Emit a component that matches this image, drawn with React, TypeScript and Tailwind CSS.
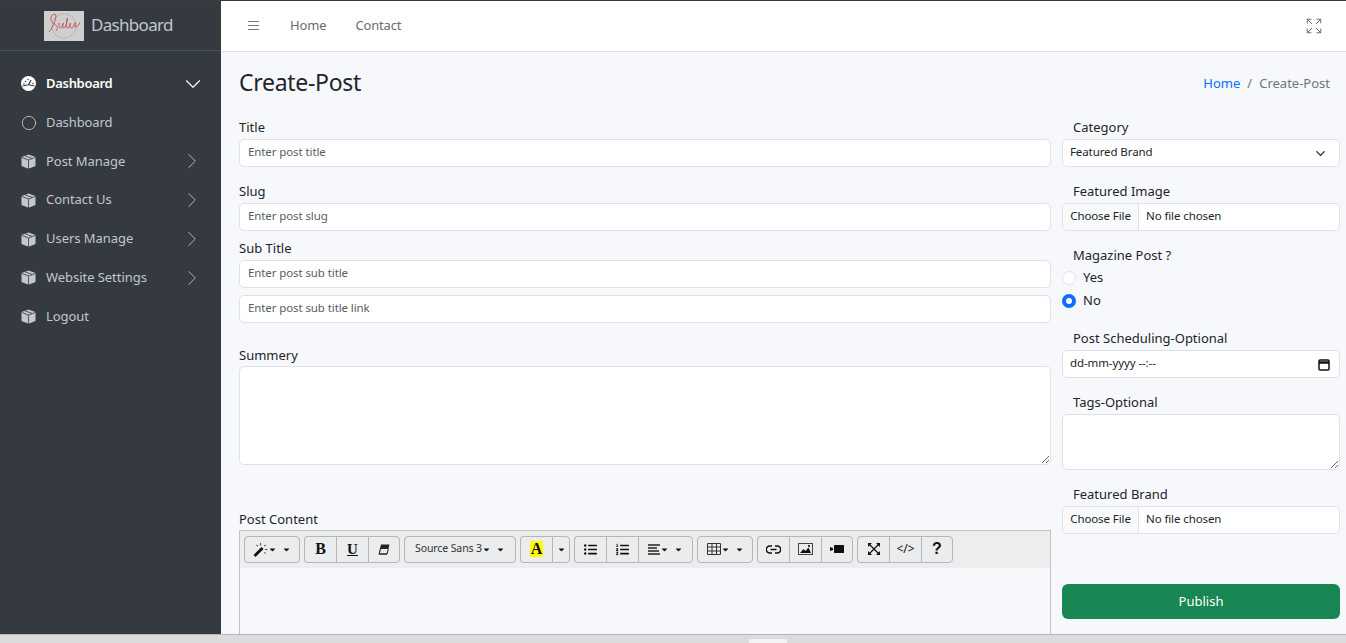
import React from "react";
import { FaListUl, FaListOl, FaCaretDown } from "react-icons/fa";
import { ChevronRight, ChevronDown, Circle, Expand } from "lucide-react";

const navItems = [
  { label: "Post Manage", arrow: true },
  { label: "Contact Us", arrow: true },
  { label: "Users Manage", arrow: true },
  { label: "Website Settings", arrow: true },
  { label: "Logout", arrow: false },
];

const Gauge = () => (
  <svg width="15" height="15" viewBox="0 0 15 15" className="shrink-0">
    <circle cx="7.5" cy="7.5" r="7.500" fill="#fff" />
    <path d="M1.500 10Q7.500 7.500 13.500 10" fill="none" stroke="#343a40" strokeWidth="1" />
    <path d="M7.500 9L10 4" stroke="#343a40" strokeWidth="1.300" />
    <path d="M4.500 5.500h.01M7 3.500h.01M3 8h.01M12 7.500h.01" stroke="#343a40" strokeWidth="1.500" strokeLinecap="round" />
  </svg>
);

const Cube = () => (
  <svg width="15" height="15" viewBox="0 0 15 15" className="shrink-0">
    <path d="M7.500 0.500L14.500 3v9l-7 2.800L0.500 12V3z" fill="#c2c7d0" />
    <path d="M0.500 3.300l7 2.700 7-2.700M7.500 6v9M4 1.800l7 2.600" fill="none" stroke="#343a40" strokeWidth="0.800" />
  </svg>
);

function Sidebar() {
  return (
    <aside className="w-[221px] shrink-0 bg-[#343a40] text-[#c2c7d0]">
      <div className="h-[50px] border-b border-[#4b545c] flex items-center pl-[44px] gap-[7px]">
        <div className="w-[40px] h-[30px] bg-[#cfcfcf] flex items-center justify-center overflow-hidden">
          <svg width="40" height="30" viewBox="0 0 40 30">
            <circle cx="20" cy="15" r="12" fill="none" stroke="#777" strokeWidth="0.800" strokeDasharray="1 1.500" />
            <path d="M5 21C9 17 14 4 11 3 7 3 5 9 9 12s6 4 3 8M15 12c0 3 0 5 1.500 5s2-4 3-5c-1 3-1 5 .5 5s3-6 3.500-10c-1 3-2 10 0 10s2-3 3-5c-1 2-1 5 1 5s2-3 3.500-5-1 5 1 4 3-2 4-5" fill="none" stroke="#c0504d" strokeWidth="0.900" />
          </svg>
        </div>
        <span className="text-[17px] leading-none tracking-[-0.7px] pb-[3px]">Dashboard</span>
      </div>
      <nav className="pt-[13px]">
        <div className="h-[39px] flex items-center pl-[21px] pr-[15px] text-white font-semibold">
          <Gauge />
          <span className="ml-[10px] flex-1 text-[13px] tracking-[-0.3px]">Dashboard</span>
          <ChevronDown className="w-[26px] h-[26px]" strokeWidth={1} />
        </div>
        <div className="h-[39px] flex items-center pl-[21px] pr-[21px]">
          <Circle className="w-[16px] h-[16px] -ml-[0.5px]" strokeWidth={1.3} />
          <span className="ml-[9.500px] flex-1 text-[13px] tracking-[-0.1px]">Dashboard</span>
        </div>
        {navItems.map((n) => (
          <div key={n.label} className="h-[38.830px] flex items-center pl-[21px] pr-[16px]">
            <Cube />
            <span className="ml-[10px] flex-1 text-[13px] tracking-[-0.05px]">{n.label}</span>
            {n.arrow && <ChevronRight className="w-[26px] h-[26px]" strokeWidth={0.8} />}
          </div>
        ))}
      </nav>
    </aside>
  );
}

const labelCls = "block text-[13px] leading-[20px] text-[#212529]";
const inputCls = "block w-full h-[28px] bg-white border border-[#dee2e6] rounded-[5px] px-[8px] pb-[4px] text-[11.500px] tracking-[-0.1px] text-[#212529] placeholder:text-[#595c5f] outline-none";
const rowText = "text-[11.500px] tracking-[-0.1px] text-[#212529]";

function Field({ label, placeholder, className }: { label: string; placeholder: string; className?: string }) {
  return (
    <div className={className}>
      <label className={`${labelCls} mb-[2px]`}>{label}</label>
      <input className={inputCls} placeholder={placeholder} />
    </div>
  );
}

function FileField({ label, className }: { label: string; className?: string }) {
  return (
    <div className={className}>
      <label className={`${labelCls} pl-[11px] mb-[2px]`}>{label}</label>
      <div className={`h-[28px] bg-white border border-[#dee2e6] rounded-[5px] flex items-center overflow-hidden ${rowText}`}>
        <span className="h-full w-[76px] pb-[3px] bg-[#f8f9fa] border-r border-[#dee2e6] flex items-center justify-center">Choose File</span>
        <span className="pl-[7px] pb-[3px]">No file chosen</span>
      </div>
    </div>
  );
}

function TB({ children, w = 32, last = false, first = false }: { children: React.ReactNode; w?: number; last?: boolean; first?: boolean }) {
  return (
    <div
      style={{ width: w }}
      className={`h-[27px] pb-[1px] flex items-center justify-center bg-[#ebecee] border-y border-[#b5b5b5] border-l text-[#111] ${first ? "rounded-l-[4px]" : ""} ${last ? "rounded-r-[4px] border-r" : ""}`}
    >
      {children}
    </div>
  );
}

const Caret = ({ className = "" }: { className?: string }) => <FaCaretDown className={`w-[9px] h-[9px] ${className}`} />;

const Wand = () => (
  <svg width="15" height="15" viewBox="0 0 15 15">
    <path d="M.5 13L8.500 5l2 2L2.500 15z" fill="#111" />
    <path d="M7.500 1v2.500M12.500 3l-1.200 1.200M14.500 7.500h-2.500M12.500 11.500l-1.200-1.200M3.500 3l1.200 1.200" stroke="#555" strokeWidth="1.100" />
  </svg>
);
const Eraser = () => (
  <svg width="12" height="11" viewBox="0 0 12 11">
    <path d="M3.500 .5H11.500L9 10.500H1z" fill="#222" />
    <path d="M2.700 5h7.600L9 9.500H1.700z" fill="#ebecee" />
    <path d="M1 10.500L3.500 .5" stroke="#222" />
    <path d="M1.500 10h7.500L10.300 5" fill="none" stroke="#222" />
  </svg>
);
const AlignLines = () => (
  <svg width="12" height="11" viewBox="0 0 12 11" fill="none" stroke="#222" strokeWidth="1.500">
    <path d="M0 1h12M0 4h9M0 7h11M0 10h12" />
  </svg>
);
const Chain = () => (
  <svg width="15" height="9" viewBox="0 0 15 9" fill="none" stroke="#111" strokeWidth="1.600">
    <path d="M6 1H3.800a3.300 3.300 0 0 0 0 7H6M9 1h2.200a3.300 3.300 0 0 1 0 7H9M4.500 4.500h6" />
  </svg>
);
const Picture = () => (
  <svg width="15" height="12" viewBox="0 0 15 12">
    <rect x=".5" y=".5" width="14" height="11" fill="none" stroke="#444" />
    <path d="M2 10l3.500-4 2 2 3-3.500 2.500 5.500z" fill="#111" />
    <circle cx="11" cy="3" r="1.100" fill="#111" />
  </svg>
);
const Camera = () => (
  <svg width="14" height="8" viewBox="0 0 14 8">
    <rect x="4" y="0" width="10" height="8" rx=".5" fill="#111" />
    <path d="M0 2l3 1v2l-3 1z" fill="#111" />
  </svg>
);
const Arrows = () => (
  <svg width="12" height="12" viewBox="0 0 12 12">
    <path d="M0 0h4L0 4zM12 0H8l4 4zM0 12h4l-4-4zM12 12H8l4-4z" fill="#111" />
    <path d="M1.500 1.500l9 9M10.500 1.500l-9 9" stroke="#111" strokeWidth="1.200" />
  </svg>
);

function Toolbar() {
  return (
    <div className="bg-[#eceded] h-[37px] pt-[5px] pl-[4px] flex items-start gap-[4px]">
      <TB w={56} first last>
        <Wand /><Caret /><Caret className="ml-[5px]" />
      </TB>
      <div className="flex">
        <TB first><span className="font-['Liberation_Serif'] font-bold text-[16px]">B</span></TB>
        <TB><span className="font-['Liberation_Serif'] font-bold text-[15px] underline">U</span></TB>
        <TB last><Eraser /></TB>
      </div>
      <TB w={112} first last>
        <span className="text-[10.500px] tracking-[-0.1px] text-[#333]">Source Sans 3</span><Caret /><Caret className="ml-[5px]" />
      </TB>
      <div className="flex">
        <TB first><span className="font-['Liberation_Serif'] font-bold text-[16px] leading-[16px] bg-[#ff0] px-[1px]">A</span></TB>
        <TB w={18} last><Caret /></TB>
      </div>
      <div className="flex">
        <TB first><FaListUl className="w-[13px] h-[13px]" /></TB>
        <TB><FaListOl className="w-[13px] h-[13px]" /></TB>
        <TB w={55} last>
          <AlignLines /><Caret /><Caret className="ml-[5px]" />
        </TB>
      </div>
      <TB w={56} first last>
        <svg width="14" height="12" viewBox="0 0 14 12" fill="none" stroke="#333" strokeWidth="1">
          <path d="M.5.5h13v11H.5zM.5 4h13M.5 8h13M5 .5v11M9.500 .5v11" />
        </svg>
        <Caret /><Caret className="ml-[5px]" />
      </TB>
      <div className="flex">
        <TB first><Chain /></TB>
        <TB><Picture /></TB>
        <TB last><Camera /></TB>
      </div>
      <div className="flex">
        <TB first><Arrows /></TB>
        <TB><span className="text-[12px]">&lt;/&gt;</span></TB>
        <TB last><span className="font-['Liberation_Sans'] font-bold text-[16px]">?</span></TB>
      </div>
    </div>
  );
}

export default function App() {
  return (
    <div className="h-[643px] w-[1346px] overflow-hidden flex flex-col font-['Noto_Sans',sans-serif] bg-[#dcdcdc]">
      <div className="h-[634px] shrink-0 flex border-t border-[#3a3a3a] overflow-hidden">
        <Sidebar />
        <div className="flex-1 min-w-0 bg-[#f7f8fb] flex flex-col">
          <header className="h-[51px] shrink-0 bg-white border-b border-[#dee2e6] flex items-center pl-[27px] pr-[23px] pb-[1px] text-[13px] tracking-[-0.15px] text-[#6b6b6b]">
            <svg width="11" height="9" viewBox="0 0 11 9" fill="none" stroke="#777" strokeWidth="1"><path d="M0 .5h11M0 4.500h11M0 8.500h11" /></svg>
            <span className="ml-[31px]">Home</span>
            <span className="ml-[29px]">Contact</span>
            <Expand className="w-[18px] h-[18px] ml-auto" strokeWidth={1.3} />
          </header>
          <main className="flex-1 min-h-0 pl-[18px] pr-[6px]">
            <div className="flex items-center justify-between h-[60px] pr-[10px]">
              <h1 className="text-[23px] tracking-[-0.3px] text-[#212529]">Create-Post</h1>
              <div className="text-[13px] text-[#6c757d] pt-[4px]">
                <span className="text-[#0d6efd]">Home</span>
                <span className="mx-[7px]">/</span>
                <span>Create-Post</span>
              </div>
            </div>
            <div className="flex gap-[11px] pt-[5px]">
              <div className="w-[812px] shrink-0">
                <Field label="Title" placeholder="Enter post title" />
                <Field label="Slug" placeholder="Enter post slug" className="mt-[14px]" />
                <Field label="Sub Title" placeholder="Enter post sub title" className="mt-[7px]" />
                <input className={`${inputCls} mt-[7px]`} placeholder="Enter post sub title link" />
                <label className={`${labelCls} mt-[22px] mb-[1px]`}>Summery</label>
                <textarea className="block w-full h-[99px] bg-white border border-[#dee2e6] rounded-[5px] outline-none" />
                <label className={`${labelCls} mt-[44px] mb-[1px]`}>Post Content</label>
                <div className="h-[200px] border border-[#c4c4c4]">
                  <Toolbar />
                </div>
              </div>
              <div className="w-[278px] shrink-0">
                <label className={`${labelCls} pl-[11px] mb-[2px]`}>Category</label>
                <div className={`h-[28px] bg-white border border-[#dee2e6] rounded-[5px] flex items-center justify-between pl-[7px] pr-[11px] ${rowText}`}>
                  <span className="pb-[3px]">Featured Brand</span>
                  <ChevronDown className="w-[15px] h-[15px]" />
                </div>
                <FileField label="Featured Image" className="mt-[14px]" />
                <label className={`${labelCls} mt-[14px] pl-[11px] mb-[1px]`}>Magazine Post ?</label>
                <div className="flex items-center h-[23px] text-[13px] text-[#212529]">
                  <span className="w-[14px] h-[14px] rounded-full bg-white border border-[#dee2e6]" />
                  <span className="ml-[7px]">Yes</span>
                </div>
                <div className="flex items-center h-[23px] text-[13px] text-[#212529]">
                  <span className="w-[14px] h-[14px] rounded-full bg-white border-[4px] border-[#0d6efd]" />
                  <span className="ml-[7px]">No</span>
                </div>
                <label className={`${labelCls} mt-[16px] pl-[11px] mb-[2px]`}>Post Scheduling-Optional</label>
                <div className={`h-[28px] bg-white border border-[#dee2e6] rounded-[5px] flex items-center justify-between pl-[7px] pr-[9px] ${rowText}`}>
                  <span className="pb-[2px]">dd-mm-yyyy --:--</span>
                  <svg width="12" height="13" viewBox="0 0 12 13" fill="none" stroke="#111" strokeWidth="1.500">
                    <rect x="1" y="2" width="10" height="10" rx="1" />
                    <path d="M1 4.500h10" strokeWidth="2.500" />
                  </svg>
                </div>
                <label className={`${labelCls} mt-[14px] pl-[11px] mb-[2px]`}>Tags-Optional</label>
                <textarea className="block w-full h-[56px] bg-white border border-[#dee2e6] rounded-[5px] outline-none" />
                <FileField label="Featured Brand" className="mt-[14px]" />
                <div className="mt-[50px] h-[35px] bg-[#198754] rounded-[6px] flex items-center justify-center text-white text-[13px]">Publish</div>
              </div>
            </div>
          </main>
        </div>
      </div>
      <div className="h-[9px] border-t border-[#b5b5b5] pl-[749px]">
        <div className="w-[38px] h-[5px] bg-[#f3f3f3] rounded-t-[3px] mt-[4px]" />
      </div>
    </div>
  );
}
